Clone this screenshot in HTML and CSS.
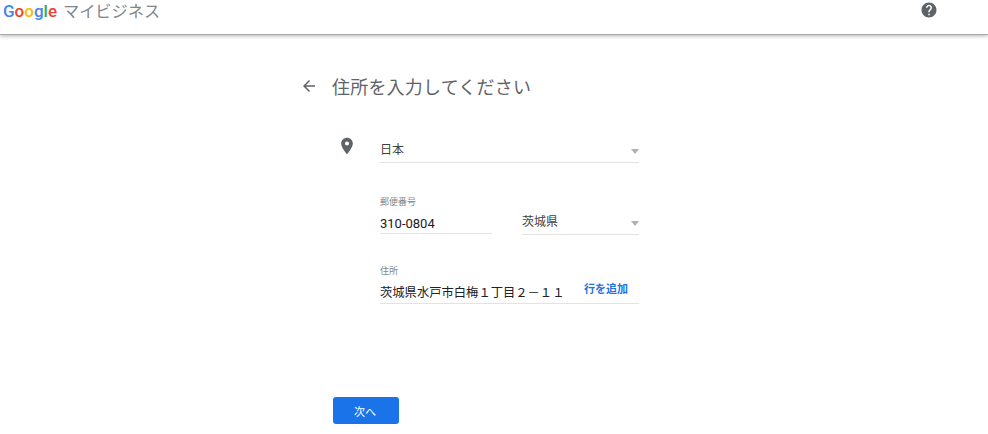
FILE: index.html
```html
<!DOCTYPE html>
<html lang="ja">
<head>
<meta charset="utf-8">
<title>Google マイビジネス</title>
<link rel="stylesheet" href="styles.css">
</head>
<body>
<header class="topbar">
  <div class="brand">
    <span class="logo"><span class="b">G</span><span class="r">o</span><span class="y">o</span><span class="b">g</span><span class="g">l</span><span class="r">e</span></span>
    <span class="product">マイビジネス</span>
  </div>
  <svg class="help" viewBox="0 0 24 24" width="18" height="18"><path fill="#5f6368" d="M12 2C6.48 2 2 6.48 2 12s4.48 10 10 10 10-4.48 10-10S17.52 2 12 2zm1 17h-2v-2h2v2zm2.07-7.75l-.9.92C13.45 12.9 13 13.5 13 15h-2v-.5c0-1.1.45-2.1 1.17-2.83l1.24-1.26c.37-.36.59-.86.59-1.41 0-1.1-.9-2-2-2s-2 .9-2 2H8c0-2.21 1.79-4 4-4s4 1.79 4 4c0 .88-.36 1.68-.93 2.25z"/></svg>
</header>
<main class="page">
  <div class="title-row">
    <svg class="back" viewBox="0 0 24 24" width="18" height="18"><path fill="#5f6368" d="M20 11H7.83l5.59-5.59L12 4l-8 8 8 8 1.41-1.41L7.83 13H20z"/></svg>
    <h1 class="title">住所を入力してください</h1>
  </div>
  <div class="form-row">
    <svg class="pin" viewBox="0 0 24 24" width="20" height="20"><path fill="#5f6368" d="M12 2C8.13 2 5 5.13 5 9c0 5.25 7 13 7 13s7-7.75 7-13c0-3.87-3.13-7-7-7zm0 9.5a2.5 2.5 0 1 1 0-5 2.5 2.5 0 0 1 0 5z"/></svg>
    <div class="fields">
      <div class="select country"><span>日本</span><i class="caret"></i></div>
      <div class="pair">
        <div class="postal">
          <div class="label">郵便番号</div>
          <div class="input">310-0804</div>
        </div>
        <div class="select pref"><span>茨城県</span><i class="caret"></i></div>
      </div>
      <div class="address">
        <div class="label">住所</div>
        <div class="input addr"><span>茨城県水戸市白梅１丁目２－１１</span><a class="add" href="#">行を追加</a></div>
      </div>
    </div>
  </div>
  <button class="next" type="button">次へ</button>
</main>
</body>
</html>
```
FILE: styles.css
```css
* { box-sizing: border-box; }
html, body { margin: 0; padding: 0; height: 100%; overflow: hidden; }
body { background: #fff; font-family: Roboto, "Noto Sans CJK JP", sans-serif; color: #3c4043; }
.topbar { height: 35px; display: flex; justify-content: space-between; align-items: flex-start; padding: 0 50px 0 3px; border-bottom: 1px solid #aaa; box-shadow: 0 1px 4px rgba(0,0,0,.3); }
.brand { display: flex; align-items: baseline; height: 21px; padding-top: 1px; line-height: 20px; }
.logo { font-size: 17px; font-weight: 500; }
.b { color: #4285f4; } .r { color: #ea4335; } .y { color: #fbbc05; } .g { color: #34a853; }
.product { margin-left: 6px; font-size: 16.2px; color: #80868b; }
.help { margin-top: 1px; }
.page { padding: 39px 0 0 302px; }
.title-row { display: flex; align-items: center; height: 24px; }
.back { margin: 0 14px 0 -2px; }
.title { margin: 0; font-size: 18px; font-weight: 400; color: #5f6368; letter-spacing: .2px; }
.form-row { display: flex; margin-top: 25px; padding-left: 35px; }
.pin { margin-top: 13px; margin-right: 23px; }
.fields { width: 259px; }
.select { display: flex; justify-content: space-between; align-items: center; border-bottom: 1px solid #e3e3e3; font-size: 12px; color: #3c4043; }
.country { height: 40px; padding-top: 11px; }
.caret { width: 0; height: 0; border: 4.5px solid transparent; border-top: 5px solid #b0b0b0; border-bottom: 0; margin-top: 6px; }
.pair { display: flex; justify-content: space-between; align-items: flex-end; margin-top: 33px; }
.postal { width: 112px; }
.label { font-size: 9px; color: #80868b; line-height: 12px; }
.input { height: 26px; padding-top: 4px; line-height: 23px; font-size: 13px; color: #202124; border-bottom: 1px solid #e3e3e3; }
.pref { width: 117px; height: 25px; padding-bottom: 4px; margin-bottom: -1px; }
.address { margin-top: 31px; }
.addr { display: flex; justify-content: space-between; height: 27px; padding-top: 5px; font-size: 12.3px; }
.add { font-size: 11px; font-weight: 700; color: #1a73e8; text-decoration: none; line-height: 16px; margin-right: 11px; }
.next { display: block; margin: 93px 0 0 31px; padding: 0 2px 0 0; width: 66px; height: 27px; background: #1a73e8; border: 0; border-radius: 3px; color: #fff; font: 400 11px Roboto, "Noto Sans CJK JP", sans-serif; }
```
